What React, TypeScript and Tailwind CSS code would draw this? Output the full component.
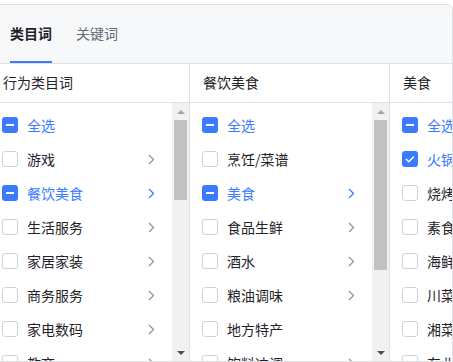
import type { ReactNode } from "react";

type CheckState = "none" | "checked" | "partial";

interface Item {
  label: string;
  state?: CheckState;
  arrow?: boolean;
  active?: boolean;
}

const col1: Item[] = [
  { label: "全选", state: "partial", active: true },
  { label: "游戏", arrow: true },
  { label: "餐饮美食", state: "partial", arrow: true, active: true },
  { label: "生活服务", arrow: true },
  { label: "家居家装", arrow: true },
  { label: "商务服务", arrow: true },
  { label: "家电数码", arrow: true },
  { label: "教育", arrow: true },
];

const col2: Item[] = [
  { label: "全选", state: "partial", active: true },
  { label: "烹饪/菜谱" },
  { label: "美食", state: "partial", arrow: true, active: true },
  { label: "食品生鲜", arrow: true },
  { label: "酒水", arrow: true },
  { label: "粮油调味", arrow: true },
  { label: "地方特产" },
  { label: "饮料冲调", arrow: true },
];

const col3: Item[] = [
  { label: "全选", state: "partial", active: true },
  { label: "火锅", state: "checked", active: true },
  { label: "烧烤" },
  { label: "素食" },
  { label: "海鲜" },
  { label: "川菜" },
  { label: "湘菜" },
  { label: "东北菜" },
];

function Checkbox({ state = "none" }: { state?: CheckState }) {
  if (state === "none") {
    return <span className="w-4 h-4 shrink-0 rounded-[3px] border border-[#d0d3d6] bg-white" />;
  }
  return (
    <span className="w-4 h-4 shrink-0 rounded-[3px] bg-[#3a7bff] flex items-center justify-center">
      {state === "partial" ? (
        <span className="w-2 h-[2px] bg-white" />
      ) : (
        <svg width="10" height="8" viewBox="0 0 10 8" fill="none">
          <path d="M1 4l2.8 2.8L9 1.4" stroke="white" strokeWidth="1.4" />
        </svg>
      )}
    </span>
  );
}

function Chevron({ active }: { active?: boolean }) {
  return (
    <svg width="7" height="11" viewBox="0 0 7 11" fill="none" className="shrink-0">
      <path d="M1 1l4.5 4.5L1 10" stroke={active ? "#3a7bff" : "#8f959e"} strokeWidth="1.3" />
    </svg>
  );
}

function Row({ item }: { item: Item }) {
  return (
    <div className="h-[34px] flex items-center pl-3 pr-[17px] gap-[9px]">
      <Checkbox state={item.state} />
      <span
        className={`flex-1 whitespace-nowrap text-sm ${item.active ? "text-[#3a7bff]" : "text-[#1f2329]"}`}
      >
        {item.label}
      </span>
      {item.arrow && <Chevron active={item.active} />}
    </div>
  );
}

function Scrollbar({ thumb }: { thumb: string }) {
  return (
    <div className="w-[17px] shrink-0 bg-[#f1f1f1] flex flex-col items-center">
      <div className="h-[17px] flex items-center justify-center">
        <span className="w-0 h-0 border-x-4 border-x-transparent border-b-4 border-b-[#a3a3a3]" />
      </div>
      <div className={`w-[13px] bg-[#c1c1c1] ${thumb}`} />
      <div className="flex-1" />
      <div className="h-[17px] flex items-center justify-center">
        <span className="w-0 h-0 border-x-4 border-x-transparent border-t-4 border-t-[#505050]" />
      </div>
    </div>
  );
}

function Column({
  title,
  items,
  thumb,
  className = "",
}: {
  title: string;
  items: Item[];
  thumb?: string;
  className?: string;
}) {
  let scroll: ReactNode = null;
  if (thumb) scroll = <Scrollbar thumb={thumb} />;
  return (
    <div className={`flex flex-col border-r border-[#dee0e3] min-w-0 ${className}`}>
      <div className="h-[39px] shrink-0 flex items-center pb-[2px] px-[13px] border-b border-[#dee0e3] text-sm text-[#1f2329] whitespace-nowrap">
        {title}
      </div>
      <div className="flex flex-1 min-h-0">
        <div className="flex-1 min-w-0 pt-[5px] overflow-hidden">
          {items.map((it) => (
            <Row key={it.label} item={it} />
          ))}
        </div>
        {scroll}
      </div>
    </div>
  );
}

export default function App() {
  return (
    <div
      className="w-[453px] h-[362px] overflow-hidden bg-white pt-1"
      style={{ fontFamily: '"Noto Sans CJK SC", "Noto Sans", sans-serif' }}
    >
      <div className="-ml-[10px] w-[463px] h-[358px] border-t border-r border-b border-[#dee0e3] rounded-tr-[6px] flex flex-col overflow-hidden">
        <div className="h-[59px] shrink-0 bg-[#f7f8fa] border-b border-[#dee0e3] flex items-end pl-5 gap-6">
          <div className="h-full flex flex-col justify-center pb-[2px] relative">
            <span className="text-sm font-semibold text-[#1f2329]">类目词</span>
            <span className="absolute left-0 right-0 bottom-0 h-[2px] bg-[#3a7bff]" />
          </div>
          <div className="h-full flex flex-col justify-center pb-[2px]">
            <span className="text-sm text-[#646a73]">关键词</span>
          </div>
        </div>
        <div className="flex flex-1 min-h-0">
          <Column title="行为类目词" items={col1} thumb="h-[80px]" className="w-[200px] shrink-0" />
          <Column title="餐饮美食" items={col2} thumb="h-[150px]" className="w-[200px] shrink-0" />
          <Column title="美食" items={col3} className="flex-1 border-r-0" />
        </div>
      </div>
    </div>
  );
}
